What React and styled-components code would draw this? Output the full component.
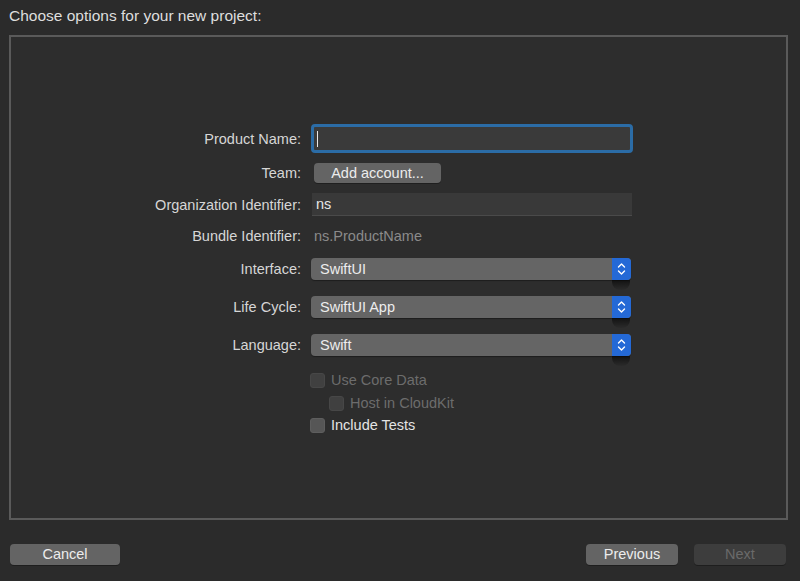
import React from "react";
import styled, { createGlobalStyle } from "styled-components";

const GlobalStyle = createGlobalStyle`
  html, body {
    margin: 0;
    padding: 0;
    background: #2b2b2b;
  }
  body {
    font-family: "Liberation Sans", Arial, sans-serif;
    -webkit-font-smoothing: antialiased;
  }
`;

function Stepper() {
  return (
    <svg width="9" height="14" viewBox="0 0 9 14" fill="none">
      <path d="M1.5 5L4.5 2L7.5 5" stroke="#fff" strokeWidth="1.4" strokeLinecap="round" strokeLinejoin="round" />
      <path d="M1.5 9L4.5 12L7.5 9" stroke="#fff" strokeWidth="1.4" strokeLinecap="round" strokeLinejoin="round" />
    </svg>
  );
}

function Popup({ value }) {
  return (
    <PopupBox>
      <PopupValue>{value}</PopupValue>
      <StepperBox>
        <Stepper />
      </StepperBox>
    </PopupBox>
  );
}

function Check({ label, disabled, indent }) {
  return (
    <CheckRow $indent={indent}>
      <CheckBox $disabled={disabled} />
      <CheckLabel $disabled={disabled}>{label}</CheckLabel>
    </CheckRow>
  );
}

function App() {
  return (
    <Page>
      <GlobalStyle />
      <Title>Choose options for your new project:</Title>
      <Panel>
        <Row $h={29}>
          <Label>Product Name:</Label>
          <FocusField>
            <Caret />
          </FocusField>
        </Row>
        <Row $h={20} $top={10}>
          <Label>Team:</Label>
          <SmallButton>Add account...</SmallButton>
        </Row>
        <Row $h={23} $top={10}>
          <Label>Organization Identifier:</Label>
          <TextField>ns</TextField>
        </Row>
        <Row $h={20} $top={10}>
          <Label>Bundle Identifier:</Label>
          <Hint>ns.ProductName</Hint>
        </Row>
        <Row $h={22} $top={12}>
          <Label>Interface:</Label>
          <Popup value="SwiftUI" />
        </Row>
        <Row $h={22} $top={16}>
          <Label>Life Cycle:</Label>
          <Popup value="SwiftUI App" />
        </Row>
        <Row $h={22} $top={16}>
          <Label>Language:</Label>
          <Popup value="Swift" />
        </Row>
        <Row $h={16} $top={16}>
          <Label />
          <Check label="Use Core Data" disabled />
        </Row>
        <Row $h={16} $top={7}>
          <Label />
          <Check label="Host in CloudKit" disabled indent />
        </Row>
        <Row $h={16} $top={6}>
          <Label />
          <Check label="Include Tests" />
        </Row>
      </Panel>
      <Footer>
        <FooterButton $w={110}>Cancel</FooterButton>
        <Spacer />
        <FooterButton $w={92}>Previous</FooterButton>
        <FooterButton $w={92} $disabled>
          Next
        </FooterButton>
      </Footer>
    </Page>
  );
}

export default App;

const Page = styled.div`
  width: 800px;
  height: 581px;
  display: flex;
  flex-direction: column;
  background: #2b2b2b;
  overflow: hidden;
`;

const Title = styled.div`
  height: 35px;
  box-sizing: border-box;
  padding: 7px 0 0 9px;
  font-size: 15.5px;
  line-height: 18px;
  color: #dedede;
`;

const Panel = styled.div`
  margin: 0 12px 0 9px;
  height: 485px;
  box-sizing: border-box;
  border: 2px solid #5a5a5a;
  background: #2d2d2d;
  padding-top: 87px;
  display: flex;
  flex-direction: column;
`;

const Row = styled.div`
  display: flex;
  align-items: center;
  height: ${(p) => p.$h}px;
  margin-top: ${(p) => p.$top || 0}px;
`;

const Label = styled.div`
  width: 290px;
  flex-shrink: 0;
  margin-right: 10px;
  text-align: right;
  font-size: 14.5px;
  color: #d6d6d6;
`;

const FocusField = styled.div`
  width: 322px;
  height: 29px;
  box-sizing: border-box;
  border: 3px solid #2b6ca6;
  border-radius: 4px;
  background: #3a3a3a;
  display: flex;
  align-items: center;
  padding-left: 3px;
`;

const Caret = styled.span`
  width: 1px;
  height: 16px;
  background: #e8e8e8;
`;

const SmallButton = styled.div`
  margin-left: 3px;
  width: 127px;
  height: 20px;
  border-radius: 4px;
  background: #646464;
  box-shadow: 0 1px 0 rgba(0, 0, 0, 0.3);
  color: #ececec;
  font-size: 14.5px;
  line-height: 20px;
  text-align: center;
`;

const TextField = styled.div`
  margin-left: 1px;
  width: 320px;
  height: 23px;
  box-sizing: border-box;
  background: #393939;
  border-bottom: 1px solid #4a4a4a;
  color: #e6e6e6;
  font-size: 14.5px;
  line-height: 22px;
  padding-left: 4px;
`;

const Hint = styled.div`
  margin-left: 3px;
  color: #8a8a8a;
  font-size: 14.5px;
`;

const PopupBox = styled.div`
  position: relative;
  width: 320px;
  height: 22px;
  display: flex;
  border-radius: 4px;
  background: #656565;
  box-shadow: 0 1px 1px rgba(0, 0, 0, 0.35);
`;

const PopupValue = styled.div`
  flex: 1;
  padding-left: 9px;
  font-size: 14.5px;
  line-height: 22px;
  color: #ededed;
`;

const StepperBox = styled.div`
  position: relative;
  width: 19px;
  display: flex;
  align-items: center;
  justify-content: center;
  background: #2469d6;
  border-radius: 0 4px 4px 0;
  &:after {
    content: "";
    position: absolute;
    left: 0;
    right: 1px;
    top: 22px;
    height: 10px;
    background: linear-gradient(rgba(0, 0, 0, 0.6), rgba(0, 0, 0, 0.05));
    border-radius: 0 0 8px 8px;
  }
`;

const CheckRow = styled.div`
  display: flex;
  align-items: center;
  gap: 6px;
  margin-left: ${(p) => (p.$indent ? 18 : -1)}px;
`;

const CheckBox = styled.span`
  width: 15px;
  height: 15px;
  box-sizing: border-box;
  border-radius: 3px;
  background: ${(p) => (p.$disabled ? "#404040" : "#565656")};
  border: 1px solid ${(p) => (p.$disabled ? "#474747" : "#5e5e5e")};
`;

const CheckLabel = styled.span`
  font-size: 14.5px;
  color: ${(p) => (p.$disabled ? "#6c6c6c" : "#e4e4e4")};
`;

const Footer = styled.div`
  display: flex;
  align-items: center;
  gap: 16px;
  padding: 0 14px 0 10px;
  margin-top: 24px;
`;

const Spacer = styled.div`
  flex: 1;
`;

const FooterButton = styled.div`
  width: ${(p) => p.$w}px;
  height: 21px;
  border-radius: 4px;
  background: ${(p) => (p.$disabled ? "#3d3d3d" : "#646464")};
  box-shadow: 0 1px 0 rgba(0, 0, 0, 0.3);
  color: ${(p) => (p.$disabled ? "#6a6a6a" : "#ececec")};
  font-size: 14.5px;
  line-height: 21px;
  text-align: center;
`;
